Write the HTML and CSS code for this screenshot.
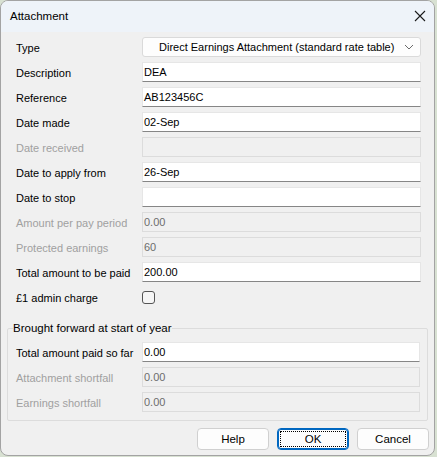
FILE: index.html
```html
<!DOCTYPE html>
<html lang="en">
<head>
    <meta charset="UTF-8">
    <title>Attachment</title>
    <link rel="stylesheet" href="styles.css">
</head>
<body>
    <div class="window">
        <div class="titlebar">
            <span class="title">Attachment</span>
            <svg class="close" width="12" height="12" viewBox="0 0 12 12">
                <path d="M1 1 L11 11 M11 1 L1 11" stroke="#1b1b1b" stroke-width="1.1" fill="none"/>
            </svg>
        </div>

        <div class="content">
            <div class="form">
                <label>Type</label>
                <div class="select">
                    <span>Direct Earnings Attachment (standard rate table)</span>
                    <svg class="chevron" width="10" height="6" viewBox="0 0 10 6">
                        <path d="M1 1 L5 5 L9 1" stroke="#6b6b6b" stroke-width="1" fill="none"/>
                    </svg>
                </div>

                <label>Description</label>
                <div class="field">DEA</div>

                <label>Reference</label>
                <div class="field">AB123456C</div>

                <label>Date made</label>
                <div class="field">02-Sep</div>

                <label class="disabled">Date received</label>
                <div class="field off"></div>

                <label>Date to apply from</label>
                <div class="field">26-Sep</div>

                <label>Date to stop</label>
                <div class="field"></div>

                <label class="disabled">Amount per pay period</label>
                <div class="field off">0.00</div>

                <label class="disabled">Protected earnings</label>
                <div class="field off">60</div>

                <label>Total amount to be paid</label>
                <div class="field">200.00</div>

                <label>£1 admin charge</label>
                <div class="check-cell"><span class="checkbox"></span></div>
            </div>

            <fieldset class="group">
                <legend>Brought forward at start of year</legend>
                <div class="form group-form">
                    <label>Total amount paid so far</label>
                    <div class="field">0.00</div>

                    <label class="disabled">Attachment shortfall</label>
                    <div class="field off">0.00</div>

                    <label class="disabled">Earnings shortfall</label>
                    <div class="field off">0.00</div>
                </div>
            </fieldset>

            <div class="buttons">
                <button>Help</button>
                <button class="default"><span>OK</span></button>
                <button>Cancel</button>
            </div>
        </div>
    </div>
</body>
</html>
```

FILE: styles.css
```css
* {
    margin: 0;
    padding: 0;
    box-sizing: border-box;
}

body {
    background: #d8e1d2;
    font-family: "Liberation Sans", Arial, sans-serif;
    font-size: 11px;
    color: #000;
}

.window {
    width: 435px;
    height: 456px;
    background: #f0f0f0;
    border: 1px solid #a3a3a3;
    border-radius: 8px;
    overflow: hidden;
}

.titlebar {
    height: 31px;
    background: #eef3f9;
    display: flex;
    align-items: center;
    justify-content: space-between;
    padding: 0 7px 1px 9px;
}

.title {
    font-size: 11.5px;
}

.close {
    margin-right: 1px;
}

.content {
    padding-top: 5px;
}

.form {
    display: grid;
    grid-template-columns: 126px 279px;
    grid-auto-rows: 20px;
    row-gap: 5px;
    padding-left: 15px;
}

.form label {
    display: flex;
    align-items: center;
    padding-top: 1px;
    white-space: nowrap;
}

.form label.disabled {
    color: #a0a0a0;
}

.select {
    display: flex;
    align-items: center;
    justify-content: space-between;
    background: #fdfdfd;
    border: 1px solid #dadada;
    border-radius: 3px;
    padding: 0 6px 0 16px;
    white-space: nowrap;
}

.field {
    display: flex;
    align-items: center;
    background: #fff;
    border: 1px solid #e6e6e6;
    border-bottom-color: #868686;
    padding: 0 1px 1px;
}

.field.off {
    background: #f0f0f0;
    border-color: #dcdcdc;
    color: #6d6d6d;
}

.check-cell {
    display: flex;
    align-items: center;
}

.checkbox {
    width: 13px;
    height: 13px;
    border: 1px solid #555;
    border-radius: 3px;
    background: #f6f6f6;
}

.group {
    margin: 13px 6px 0 6px;
    border: 1px solid #dcdcdc;
    border-radius: 2px;
    padding: 0 0 8px 5px;
}

.group legend {
    padding: 0;
    line-height: 16px;
    font-size: 11.5px;
}

.group-form {
    padding-left: 3px;
    padding-top: 6px;
    grid-template-columns: 126px 278px;
}

.buttons {
    display: flex;
    justify-content: flex-end;
    gap: 8px;
    padding: 7px 5px 0 0;
}

button {
    width: 72px;
    height: 22px;
    background: #fdfdfd;
    border: 1px solid #d0d0d0;
    border-radius: 4px;
    font-family: inherit;
    font-size: 11.5px;
    color: #000;
}

button.default {
    border-color: #0067c0;
    box-shadow: inset 0 0 0 1px #0067c0;
    padding: 2px;
}

button.default span {
    display: flex;
    align-items: center;
    justify-content: center;
    height: 100%;
    border: 1px dotted #000;
}
```
